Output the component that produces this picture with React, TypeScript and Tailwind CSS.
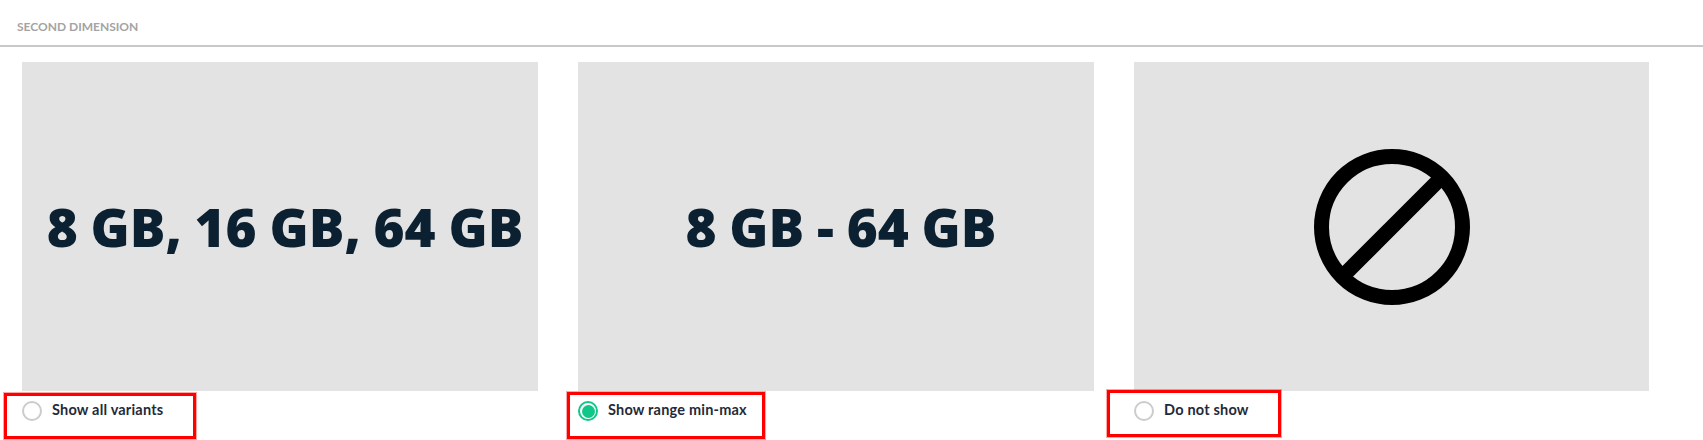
const BigText = ({ children }: { children: string }) => (
  <span className="pl-[10px] font-['Open_Sans',sans-serif] text-[53px] font-extrabold leading-none whitespace-nowrap [word-spacing:-1px] text-[#0b2030]">
    {children}
  </span>
);

const NoEntry = () => (
  <svg width="156" height="156" viewBox="0 0 156 156" fill="none" stroke="#000" strokeWidth="15">
    <circle cx="78" cy="78" r="70.5" />
    <line x1="27" y1="129" x2="129" y2="27" />
  </svg>
);

const Radio = ({ checked }: { checked?: boolean }) =>
  checked ? (
    <span className="flex h-5 w-5 shrink-0 items-center justify-center rounded-full border-2 border-[#10c78a] bg-white">
      <span className="h-[13px] w-[13px] rounded-full bg-[#10c78a]" />
    </span>
  ) : (
    <span className="h-5 w-5 shrink-0 rounded-full border-2 border-[#cccccc] bg-white" />
  );

const options = [
  { label: "Show all variants", width: "w-[516px]", box: "-left-[18px] top-[331px] w-[192px] h-[46px]", content: <BigText>8 GB, 16 GB, 64 GB</BigText> },
  { label: "Show range min-max", width: "w-[516px]", box: "-left-[11px] top-[330px] w-[198px] h-[47px]", checked: true, content: <BigText>8 GB - 64 GB</BigText> },
  { label: "Do not show", width: "w-[515px]", box: "-left-[27px] top-[328px] w-[174px] h-[47px]", content: <NoEntry /> },
];

export default function App() {
  return (
    <div className="h-[440px] w-[1703px] overflow-hidden bg-white font-['Lato',sans-serif]">
      {/* Section title */}
      <div className="flex h-[47px] items-start border-b-2 border-[#c8c8c8] pl-[17px] pt-[19px]">
        <span className="text-[12px] font-bold uppercase leading-4 text-[#a3a3a3]">Second dimension</span>
      </div>

      {/* Options */}
      <div className="flex gap-10 pl-[22px] pt-[15px]">
        {options.map((option) => (
          <div key={option.label} className={`relative ${option.width}`}>
            <div className="flex h-[329px] items-center justify-center bg-[#e3e3e3]">{option.content}</div>
            <label className="mt-[10px] flex items-start gap-[10px]">
              <Radio checked={option.checked} />
              <span className="text-[14.5px] font-bold leading-[18px] tracking-[0.2px] text-[#1f2a3a]">{option.label}</span>
            </label>
            {/* Red annotation box */}
            <div className={`absolute border-[3px] border-[#ff0000] shadow-[0_0_0_1px_rgba(255,0,0,0.35)] ${option.box}`} />
          </div>
        ))}
      </div>
    </div>
  );
}
